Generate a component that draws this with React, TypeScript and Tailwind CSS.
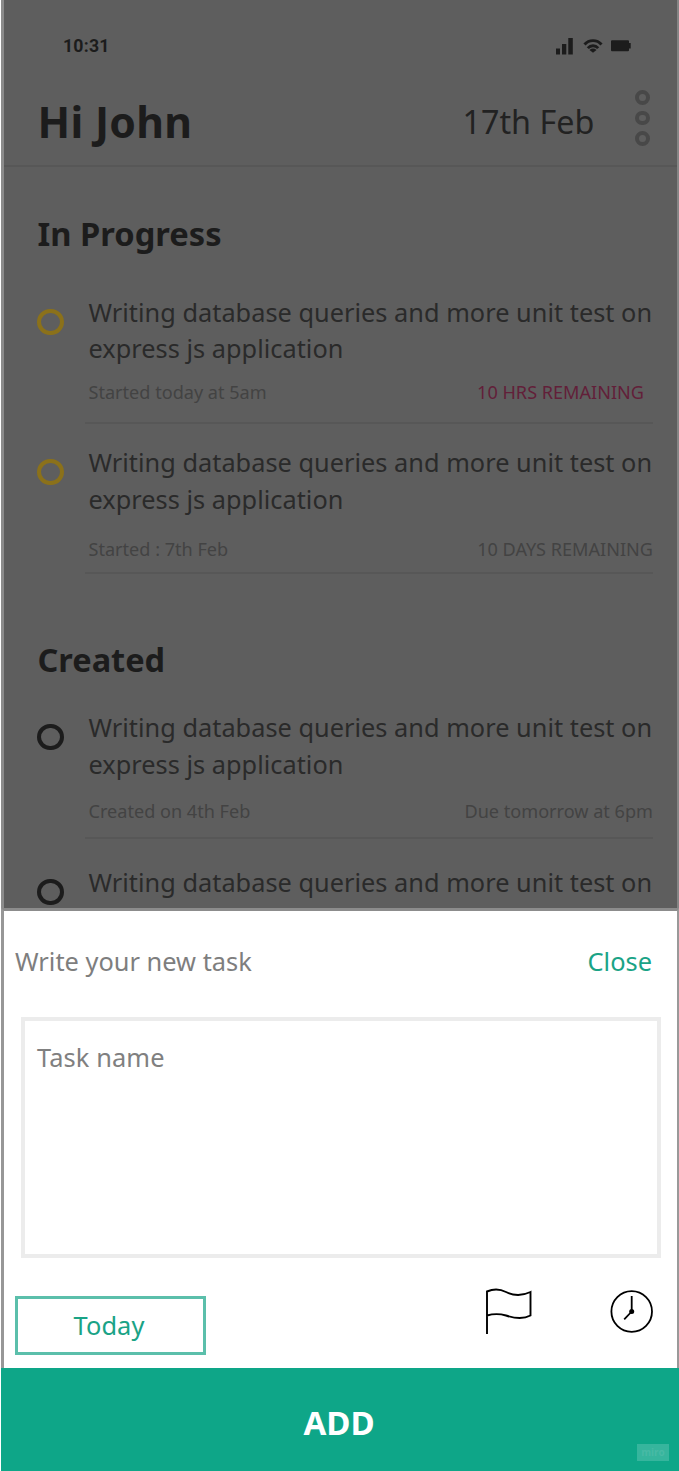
import React from "react";

type Task = {
  title: string[];
  left?: string;
  right?: string;
  ring: string;
  rightClass?: string;
  height: string;
  leading: string;
  metaGap: string;
  ruleGap: string;
};

const LINES = ["Writing database queries and more unit test on", "express js application"];
const YELLOW = "border-[#8b711a]";
const BLACK = "border-[#1c1c1c]";

const inProgress: Task[] = [
  {
    title: LINES,
    left: "Started today at 5am",
    right: "10 HRS REMAINING",
    rightClass: "pr-[9px] text-[#621f39]",
    ring: YELLOW,
    height: "h-[150px]",
    leading: "leading-[36px]",
    metaGap: "mt-[14px]",
    ruleGap: "mt-[18px]",
  },
  {
    title: LINES,
    left: "Started : 7th Feb",
    right: "10 DAYS REMAINING",
    ring: YELLOW,
    height: "h-[130px]",
    leading: "leading-[37px]",
    metaGap: "mt-[19px]",
    ruleGap: "mt-[11px]",
  },
];

const created: Task[] = [
  {
    title: LINES,
    left: "Created on 4th Feb",
    right: "Due tomorrow at 6pm",
    ring: BLACK,
    height: "h-[155px]",
    leading: "leading-[37px]",
    metaGap: "mt-[16px]",
    ruleGap: "mt-[14px]",
  },
  {
    title: LINES.slice(0, 1),
    ring: BLACK,
    height: "h-[44px]",
    leading: "leading-[37px]",
    metaGap: "",
    ruleGap: "",
  },
];

function TaskRow({ task }: { task: Task }) {
  return (
    <li className={`flex ${task.height}`}>
      <span className={`mt-[15px] ml-[33px] h-[26px] w-[27px] shrink-0 rounded-full border-4 ${task.ring}`} />
      <div className="ml-[21px] w-[568px]">
        <div className={`ml-[3.5px] text-[25.3px] tracking-[0.03px] whitespace-nowrap text-[#2a2a2a] ${task.leading}`}>
          {task.title.map((line) => (
            <p key={line}>{line}</p>
          ))}
        </div>
        {task.left && (
          <>
            <div className={`ml-[3.5px] flex justify-between text-[18.1px] leading-[24px] whitespace-nowrap text-[#434343] ${task.metaGap}`}>
              <span>{task.left}</span>
              <span className={task.rightClass}>{task.right}</span>
            </div>
            <div className={`h-[2px] bg-[#575757] ${task.ruleGap}`} />
          </>
        )}
      </div>
    </li>
  );
}

function StatusIcons() {
  return (
    <svg className="mt-[36px] h-[20px] w-[78px]" viewBox="555 36 78 20" fill="#1c1c1c">
      <path d="M556 48.500h4v6h-4zM562 44h4.300v10.500H562zM568.300 38h4.500v16.500h-4.500z" />
      <g fill="none" stroke="#1c1c1c" strokeWidth="2.900">
        <path d="M584.500 44.500C589 39.300 597 39.300 601.500 44.500" />
        <path d="M587.800 48.100C590.700 44.900 595.300 44.900 598.200 48.100" />
      </g>
      <path d="M589.500 50Q593 47.200 596.500 50L593 52.800z" />
      <path d="M612 40.300h16q1 0 1 1v1.700h1.700v5.500H629v1.700q0 1-1 1h-16q-1 0-1-1v-8.900q0-1 1-1z" />
    </svg>
  );
}

function Flag() {
  return (
    <svg className="absolute top-0 left-[476px]" width="54" height="50" viewBox="480 1286 54 50" fill="none" stroke="#000" strokeWidth="1.900">
      <path d="M487 1334V1291.500C493 1289 500 1289 506 1292C514 1296 521 1296.500 530.500 1292V1315.500C523 1319.500 515 1318.500 506 1315.500C499 1313.500 494 1313.500 487 1315.500" />
    </svg>
  );
}

function Clock() {
  return (
    <svg className="mt-[3px]" width="46" height="46" viewBox="608 1289 46 46" fill="none" stroke="#000" strokeWidth="1.800">
      <circle cx="631.700" cy="1311.500" r="20.300" />
      <path d="M631.700 1296v15.500l-7.500 7.800" />
      <circle cx="631.700" cy="1311.500" r="2.500" fill="#000" stroke="none" />
    </svg>
  );
}

export default function App() {
  return (
    <main className="flex h-[1471px] w-[679px] flex-col overflow-hidden bg-white pl-px font-['Noto_Sans',sans-serif]">
      <section className="h-[908px] overflow-hidden border-r-2 border-l-3 border-r-[#858585] border-l-[#8c8c8c] bg-[#5e5e5e]">
        <header className="flex h-[167px] flex-col border-b-2 border-[#575757]">
          <div className="flex h-[80px] justify-between pr-[44px] pl-[59px]">
            <time className="mt-[34px] font-[Roboto] text-[17.7px] leading-[24px] font-bold tracking-[0.2px] text-[#1c1c1c]">10:31</time>
            <StatusIcons />
          </div>
          <div className="flex flex-1 pl-[34px]">
            <h1 className="mt-[17px] -ml-[0.5px] w-[425px] text-[42.7px] leading-[50px] font-bold tracking-[0.3px] text-[#1c1c1c]">Hi John</h1>
            <p className="mt-[21px] w-[172.5px] text-[32.3px] leading-[40px] whitespace-nowrap text-[#222222]">17th Feb</p>
            <div className="mt-[10px] flex flex-col gap-[6px]">
              <i className="h-[14.500px] w-[14.500px] rounded-full border-4 border-[#484848]" />
              <i className="h-[14.500px] w-[14.500px] rounded-full border-4 border-[#484848]" />
              <i className="h-[14.500px] w-[14.500px] rounded-full border-4 border-[#484848]" />
            </div>
          </div>
        </header>
        <h2 className="mt-[47px] ml-[33.5px] text-[32.7px] leading-[40px] font-bold text-[#1c1c1c]">In Progress</h2>
        <ul className="mt-[40px]">
          {inProgress.map((t) => (
            <TaskRow key={t.left} task={t} />
          ))}
        </ul>
        <h2 className="mt-[66px] ml-[33.5px] text-[32.5px] leading-[40px] font-bold text-[#1c1c1c]">Created</h2>
        <ul className="mt-[29px]">
          {created.map((t, i) => (
            <TaskRow key={i} task={t} />
          ))}
        </ul>
      </section>

      <section className="flex h-[460px] flex-col border-t-3 border-r-2 border-l-3 border-t-[#8c8c8c] border-r-[#999999] border-l-[#979797] bg-white text-[25.4px]">
        <div className="mt-[32px] flex justify-between pr-[25px] pl-[11px] leading-[36px]">
          <span className="text-[#7e7e7e]">Write your new task</span>
          <button className="text-[#1aa386]">Close</button>
        </div>
        <div className="mt-[38px] ml-[17px] h-[241px] w-[640px] border-4 border-[#ececec] px-[12px] pt-[18px] leading-[36px] tracking-[0.1px] text-[#808080]">Task name</div>
        <div className="relative mt-[28px] flex h-[69px] justify-between pr-[23px] pl-[11px]">
          <button className="mt-[10px] h-[59px] w-[191px] border-3 border-[#5bbfab] pr-[3px] leading-[51px] tracking-[0.1px] text-[#1aa386]">
            Today
          </button>
          <Flag />
          <Clock />
        </div>
      </section>

      <button className="relative h-[103px] bg-[#0ea688] text-[33px] leading-[109px] font-bold text-white">
        <span className="relative -left-[1px]">ADD</span>
        <span className="absolute right-[10px] bottom-[10px] h-[17px] w-[32px] bg-[#36b59d] text-center font-['Open_Sans'] text-[10px] leading-[16px] font-bold text-[#48baa5]">miro</span>
      </button>
    </main>
  );
}
